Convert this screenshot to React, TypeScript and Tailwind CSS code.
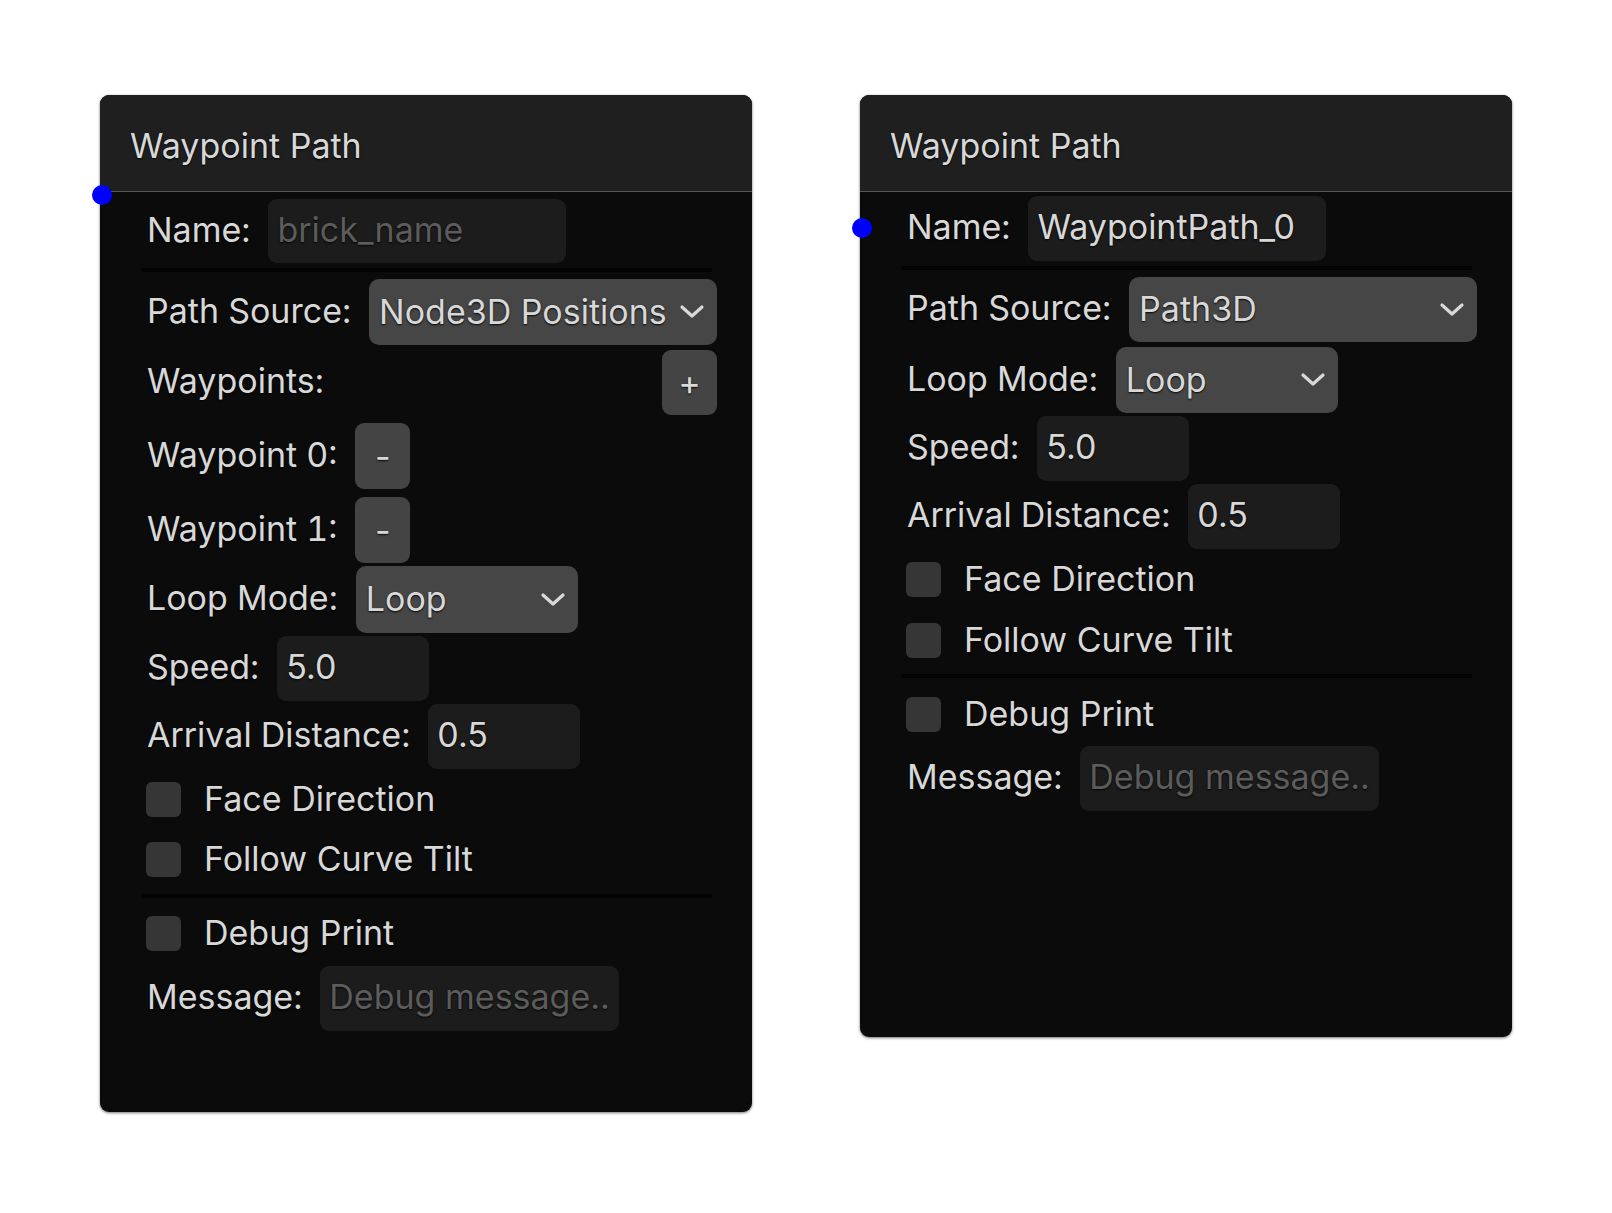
import type { ReactNode } from 'react';

const font = { fontFamily: 'Inter, "Noto Sans", sans-serif' };

function Chevron() {
  return (
    <svg width="26" height="16" viewBox="0 0 26 16" className="shrink-0">
      <polyline
        points="3,3 13,12 23,3"
        fill="none"
        stroke="#d9d9d9"
        strokeWidth="3.2"
        strokeLinecap="round"
        strokeLinejoin="round"
      />
    </svg>
  );
}

function Row({ label, className, children }: { label?: string; className: string; children?: ReactNode }) {
  return (
    <div className={`flex items-center pl-[47px] pr-[35px] ${className}`}>
      {label && <span className="mr-[18px] whitespace-nowrap tabular-nums -translate-y-[2px]">{label}</span>}
      {children}
    </div>
  );
}

function Input({ value, placeholder, w }: { value?: string; placeholder?: string; w: string }) {
  return (
    <div className={`h-full ${w} rounded-[9px] bg-[#1c1c1c] pl-[9px] flex items-center whitespace-nowrap overflow-hidden`}>
      {value ? (
        <span className="-translate-y-[2px]">{value}</span>
      ) : (
        <span className="text-[#5c5c5c] -translate-y-[2px]">{placeholder}</span>
      )}
    </div>
  );
}

function Select({ value, w }: { value: string; w: string }) {
  return (
    <div className={`h-full ${w} rounded-[10px] bg-[#464646] pl-[10px] pr-[12px] flex items-center justify-between whitespace-nowrap`}>
      <span className="-translate-y-[1px]">{value}</span>
      <Chevron />
    </div>
  );
}

function Btn({ children, className = '' }: { children: ReactNode; className?: string }) {
  return (
    <div className={`h-full w-[55px] rounded-[9px] bg-[#444444] flex items-center justify-center text-[34px] ${className}`}>
      {children}
    </div>
  );
}

function Check({ label, className }: { label: string; className: string }) {
  return (
    <div className={`flex items-center pl-[46px] ${className}`}>
      <div className="w-[35px] h-[35px] rounded-[6px] bg-[#363636]" />
      <span className="ml-[23px] whitespace-nowrap -translate-y-[1px]">{label}</span>
    </div>
  );
}

function Divider({ className }: { className: string }) {
  return <div className={`h-[4px] ml-[41px] mr-[40px] bg-[#040404] ${className}`} />;
}

function Panel({ h, dot, children }: { h: string; dot: string; children: ReactNode }) {
  return (
    <div className={`relative w-[652px] ${h} rounded-[9px] bg-[#0b0b0b] shadow-[0_1px_3px_rgba(0,0,0,0.55)] text-[#d8d8d8] text-[34px] [text-shadow:0_1px_2px_rgba(0,0,0,0.9)]`}>
      <div className="h-[97px] rounded-t-[9px] bg-[#1f1f1f] border-b border-[#575757] flex items-center pl-[30px] pt-[5px]">
        Waypoint Path
      </div>
      <div className="flex flex-col">{children}</div>
      <div className={`absolute left-[-8px] w-[20px] h-[20px] rounded-full bg-[#0000ff] ${dot}`} />
    </div>
  );
}

export default function App() {
  return (
    <div className="min-h-screen bg-white flex items-start gap-[108px] pl-[100px] pt-[95px]" style={font}>
      <Panel h="h-[1017px]" dot="top-[90px]">
        <Row label="Name:" className="mt-[7px] h-[64px]">
          <Input placeholder="brick_name" w="w-[298px]" />
        </Row>
        <Divider className="mt-[5px]" />
        <Row label="Path Source:" className="mt-[7px] h-[66px]">
          <div className="flex-1 h-full">
            <Select value="Node3D Positions" w="w-full" />
          </div>
        </Row>
        <Row label="Waypoints:" className="mt-[5px] h-[65px]">
          <Btn className="ml-auto">+</Btn>
        </Row>
        <Row label="Waypoint 0:" className="mt-[8px] h-[66px]">
          <Btn>-</Btn>
        </Row>
        <Row label="Waypoint 1:" className="mt-[8px] h-[66px]">
          <Btn>-</Btn>
        </Row>
        <Row label="Loop Mode:" className="mt-[3px] h-[67px]">
          <Select value="Loop" w="w-[222px]" />
        </Row>
        <Row label="Speed:" className="mt-[3px] h-[65px]">
          <Input value="5.0" w="w-[152px]" />
        </Row>
        <Row label="Arrival Distance:" className="mt-[3px] h-[65px]">
          <Input value="0.5" w="w-[152px]" />
        </Row>
        <Check label="Face Direction" className="mt-[13px] h-[35px]" />
        <Check label="Follow Curve Tilt" className="mt-[25px] h-[35px]" />
        <Divider className="mt-[17px]" />
        <Check label="Debug Print" className="mt-[18px] h-[35px]" />
        <Row label="Message:" className="mt-[15px] h-[65px]">
          <Input placeholder="Debug message.." w="w-[299px]" />
        </Row>
      </Panel>

      <Panel h="h-[942px]" dot="top-[123px]">
        <Row label="Name:" className="mt-[4px] h-[65px]">
          <Input value="WaypointPath_0" w="w-[298px]" />
        </Row>
        <Divider className="mt-[5px]" />
        <Row label="Path Source:" className="mt-[7px] h-[65px]">
          <div className="flex-1 h-full">
            <Select value="Path3D" w="w-full" />
          </div>
        </Row>
        <Row label="Loop Mode:" className="mt-[5px] h-[66px]">
          <Select value="Loop" w="w-[222px]" />
        </Row>
        <Row label="Speed:" className="mt-[3px] h-[65px]">
          <Input value="5.0" w="w-[152px]" />
        </Row>
        <Row label="Arrival Distance:" className="mt-[3px] h-[65px]">
          <Input value="0.5" w="w-[152px]" />
        </Row>
        <Check label="Face Direction" className="mt-[13px] h-[34px]" />
        <Check label="Follow Curve Tilt" className="mt-[27px] h-[34px]" />
        <Divider className="mt-[17px]" />
        <Check label="Debug Print" className="mt-[19px] h-[34px]" />
        <Row label="Message:" className="mt-[15px] h-[65px]">
          <Input placeholder="Debug message.." w="w-[299px]" />
        </Row>
      </Panel>
    </div>
  );
}
